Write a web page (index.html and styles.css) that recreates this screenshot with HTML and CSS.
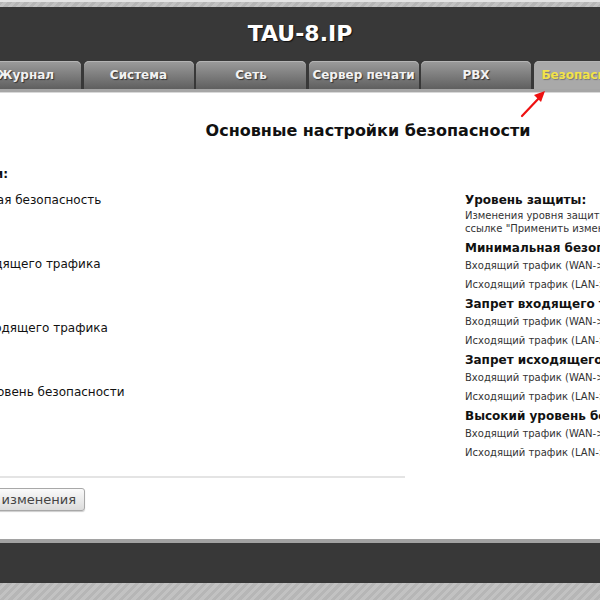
FILE: index.html
```html
<!DOCTYPE html>
<html lang="ru">
<head>
<meta charset="utf-8">
<title>TAU-8.IP</title>
<link rel="stylesheet" href="styles.css">
</head>
<body>
<div class="page">
  <div class="stripe-top"></div>
  <header class="header">
    <div class="title">TAU-8.IP</div>
    <nav class="tabs">
      <div class="tab">Журнал</div>
      <div class="tab">Система</div>
      <div class="tab">Сеть</div>
      <div class="tab">Сервер печати</div>
      <div class="tab">PBX</div>
      <div class="tab active">Безопасность</div>
      <div class="tab">Приложения</div>
    </nav>
  </header>
  <div class="tabline"></div>
  <main class="content">
    <h1 class="heading">Основные настройки безопасности</h1>
    <div class="cols">
      <section class="form">
        <div class="form-title"><span>Уровень безопасности:</span></div>
        <label class="opt"><input type="radio" name="lvl" checked> Минимальная безопасность</label>
        <label class="opt"><input type="radio" name="lvl"> Запрет входящего трафика</label>
        <label class="opt"><input type="radio" name="lvl"> Запрет исходящего трафика</label>
        <label class="opt"><input type="radio" name="lvl"> Высокий уровень безопасности</label>
        <div class="rule"></div>
        <div class="btn-row"><button class="btn">Применить изменения</button></div>
      </section>
      <aside class="help">
        <h3>Уровень защиты:</h3>
        <p class="desc">Изменения уровня защиты вступают в силу после нажатия на ссылке "Применить изменения"</p>
        <h3>Минимальная безопасность</h3>
        <p>Входящий трафик (WAN-&gt;LAN): разрешен</p>
        <p>Исходящий трафик (LAN-&gt;WAN): разрешен</p>
        <h3>Запрет входящего трафика</h3>
        <p>Входящий трафик (WAN-&gt;LAN): запрещен</p>
        <p>Исходящий трафик (LAN-&gt;WAN): разрешен</p>
        <h3>Запрет исходящего трафика</h3>
        <p>Входящий трафик (WAN-&gt;LAN): разрешен</p>
        <p>Исходящий трафик (LAN-&gt;WAN): запрещен</p>
        <h3>Высокий уровень безопасности</h3>
        <p>Входящий трафик (WAN-&gt;LAN): запрещен</p>
        <p>Исходящий трафик (LAN-&gt;WAN): запрещен</p>
      </aside>
    </div>
  </main>
  <div class="footline"></div>
  <footer class="footer"></footer>
  <div class="stripe-bottom"></div>
  <svg class="arrow" width="40" height="40" viewBox="0 0 40 40">
    <line x1="6" y1="30" x2="24" y2="11" stroke="#ee1111" stroke-width="2.2" stroke-linecap="round"/>
    <polygon points="29,5 18,9 25,16" fill="#ee1111"/>
  </svg>
</div>
</body>
</html>
```

FILE: styles.css
```css
html, body {
  margin: 0;
  padding: 0;
  background: #fff;
  overflow: hidden;
}
body {
  width: 600px;
  height: 600px;
  font-family: "DejaVu Sans", Verdana, sans-serif;
  color: #111;
}
.page {
  position: relative;
  width: 1000px;
  margin-left: -200px;
}
.stripe-top {
  height: 7px;
  border-top: 2px solid #e4e4e4;
  box-sizing: border-box;
  background: repeating-linear-gradient(135deg, #c2c2c2 0 3px, #b6b6b6 3px 6px);
}
.header {
  background: #383838;
  height: 82px;
  display: flex;
  flex-direction: column;
  justify-content: flex-end;
}
.title {
  text-align: center;
  color: #fff;
  font-weight: bold;
  font-size: 22px;
  line-height: 28px;
  text-shadow: 1px 1px 1px #111;
  margin-bottom: 13px;
}
.tabs {
  display: flex;
  gap: 2.5px;
  padding-left: 171px;
  height: 28px;
}
.tab {
  flex: 0 0 110px;
  box-sizing: border-box;
  border-radius: 5px 5px 0 0;
  background: linear-gradient(#9c9c9c, #5f5f5f);
  color: #f2f2f2;
  font-weight: bold;
  font-size: 12px;
  text-align: center;
  line-height: 29px;
  text-shadow: 1px 1px 1px #333;
  white-space: nowrap;
  overflow: hidden;
  box-shadow: inset 0 1px 0 #b4b4b4;
}
.tab.active {
  background: #a9a9a9;
  color: #f2e34a;
  text-shadow: 1px 1px 1px #777;
}
.tabline {
  height: 3px;
  background: #a6a6a6;
  border-bottom: 1px solid #d8d8d8;
}
.content {
  height: 446px;
  box-sizing: border-box;
  padding-top: 27px;
}
.heading {
  margin: 0;
  font-size: 16px;
  line-height: 22px;
  font-weight: bold;
  text-align: center;
  padding-left: 136px;
  color: #111;
}
.cols {
  display: flex;
  margin-top: 24px;
}
.form {
  flex: none;
  width: 505px;
  margin-left: 100px;
}
.form-title {
  display: flex;
  justify-content: flex-end;
  width: 108px;
  font-size: 12px;
  font-weight: bold;
  line-height: 16px;
  white-space: nowrap;
  color: #111;
}
.opt {
  display: flex;
  align-items: flex-start;
  height: 64px;
  font-size: 12px;
  line-height: 16px;
  padding-top: 10px;
  box-sizing: border-box;
  margin-left: 7px;
  gap: 4px;
  color: #111;
}
.opt input {
  margin: 2px 0 0 0;
  width: 13px;
  height: 13px;
}
.rule {
  margin-top: 38px;
  height: 2px;
  background: #e4e4e4;
  margin-left: -100px;
}
.btn-row {
  margin-top: 10px;
  display: flex;
  justify-content: flex-start;
  padding-left: 12px;
}
.btn {
  font-family: "DejaVu Sans", Verdana, sans-serif;
  font-size: 13px;
  color: #444;
  height: 23px;
  padding: 0 8px;
  border: 1px solid #a8a8a8;
  border-radius: 3px;
  background: linear-gradient(#fafafa, #dcdcdc);
  box-shadow: 0 1px 1px #ccc;
}
.help {
  flex: none;
  margin-left: 60px;
  width: 330px;
  font-size: 10px;
  line-height: 13px;
  color: #333;
  padding-top: 27px;
  white-space: nowrap;
}
.help h3 {
  margin: 0;
  font-size: 12px;
  line-height: 14px;
  color: #111;
}
.help p {
  margin: 4px 0 6px;
}
.help p.desc {
  white-space: normal;
  width: 360px;
  margin: 2px 0 6px;
}
.footline {
  height: 4px;
  background: #a2a2a2;
}
.footer {
  height: 40px;
  background: #383838;
}
.stripe-bottom {
  height: 40px;
  background: repeating-linear-gradient(135deg, #c2c2c2 0 3px, #b6b6b6 3px 6px);
}
.arrow {
  position: absolute;
  left: 716px;
  top: 86px;
}
```
